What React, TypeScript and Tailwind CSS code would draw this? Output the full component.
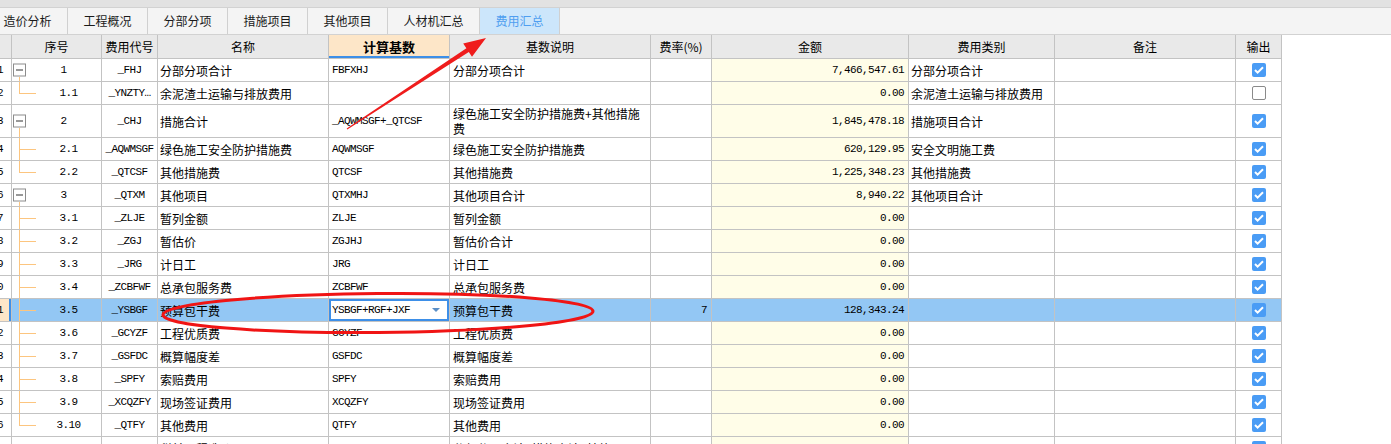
import React from "react";

type Row = {
  rn: string;
  seq: string;
  kind: "box" | "child" | "last" | "none";
  code: string;
  name: string;
  base: string;
  desc: React.ReactNode;
  rate?: string;
  amount: string;
  cat: string;
  out: boolean;
  tall?: boolean;
  sel?: boolean;
};

const rows: Row[] = [
  { rn: "1", seq: "1", kind: "box", code: "_FHJ", name: "分部分项合计", base: "FBFXHJ", desc: "分部分项合计", amount: "7,466,547.61", cat: "分部分项合计", out: true },
  { rn: "2", seq: "1.1", kind: "last", code: "_YNZTY…", name: "余泥渣土运输与排放费用", base: "", desc: "", amount: "0.00", cat: "余泥渣土运输与排放费用", out: false },
  {
    rn: "3",
    seq: "2",
    kind: "box",
    code: "_CHJ",
    name: "措施合计",
    base: "_AQWMSGF+_QTCSF",
    desc: (
      <>
        绿色施工安全防护措施费+其他措施
        <br />费
      </>
    ),
    amount: "1,845,478.18",
    cat: "措施项目合计",
    out: true,
    tall: true,
  },
  { rn: "4", seq: "2.1", kind: "child", code: "_AQWMSGF", name: "绿色施工安全防护措施费", base: "AQWMSGF", desc: "绿色施工安全防护措施费", amount: "620,129.95", cat: "安全文明施工费", out: true },
  { rn: "5", seq: "2.2", kind: "last", code: "_QTCSF", name: "其他措施费", base: "QTCSF", desc: "其他措施费", amount: "1,225,348.23", cat: "其他措施费", out: true },
  { rn: "6", seq: "3", kind: "box", code: "_QTXM", name: "其他项目", base: "QTXMHJ", desc: "其他项目合计", amount: "8,940.22", cat: "其他项目合计", out: true },
  { rn: "7", seq: "3.1", kind: "child", code: "_ZLJE", name: "暂列金额", base: "ZLJE", desc: "暂列金额", amount: "0.00", cat: "", out: true },
  { rn: "8", seq: "3.2", kind: "child", code: "_ZGJ", name: "暂估价", base: "ZGJHJ", desc: "暂估价合计", amount: "0.00", cat: "", out: true },
  { rn: "9", seq: "3.3", kind: "child", code: "_JRG", name: "计日工", base: "JRG", desc: "计日工", amount: "0.00", cat: "", out: true },
  { rn: "10", seq: "3.4", kind: "child", code: "_ZCBFWF", name: "总承包服务费", base: "ZCBFWF", desc: "总承包服务费", amount: "0.00", cat: "", out: true },
  { rn: "11", seq: "3.5", kind: "child", code: "_YSBGF", name: "预算包干费", base: "YSBGF+RGF+JXF", desc: "预算包干费", rate: "7", amount: "128,343.24", cat: "", out: true, sel: true },
  { rn: "12", seq: "3.6", kind: "child", code: "_GCYZF", name: "工程优质费", base: "GCYZF", desc: "工程优质费", amount: "0.00", cat: "", out: true },
  { rn: "13", seq: "3.7", kind: "child", code: "_GSFDC", name: "概算幅度差", base: "GSFDC", desc: "概算幅度差", amount: "0.00", cat: "", out: true },
  { rn: "14", seq: "3.8", kind: "child", code: "_SPFY", name: "索赔费用", base: "SPFY", desc: "索赔费用", amount: "0.00", cat: "", out: true },
  { rn: "15", seq: "3.9", kind: "child", code: "_XCQZFY", name: "现场签证费用", base: "XCQZFY", desc: "现场签证费用", amount: "0.00", cat: "", out: true },
  { rn: "16", seq: "3.10", kind: "last", code: "_QTFY", name: "其他费用", base: "QTFY", desc: "其他费用", amount: "0.00", cat: "", out: true },
  { rn: "17", seq: "4", kind: "none", code: "_SQGCZJ", name: "税前工程造价", base: "_FHJ+_CHJ+_QTXM", desc: "分部分项合计+措施合计+其他项目", amount: "9,340,311.01", cat: "", out: true },
];

const tabs = [
  { t: "造价分析", w: "w-[80px]" },
  { t: "工程概况", w: "w-[80px]" },
  { t: "分部分项", w: "w-[80px]" },
  { t: "措施项目", w: "w-[80px]" },
  { t: "其他项目", w: "w-[80px]" },
  { t: "人材机汇总", w: "w-[92px]" },
  { t: "费用汇总", w: "w-[80px]" },
];

const cn = "font-['Noto_Sans_CJK_SC',sans-serif] text-[12px] leading-[15px] text-black";
const mono = "font-['Liberation_Mono','Noto_Sans_CJK_SC',monospace] text-[11px] tracking-[-0.6px] leading-none text-black";
const cell = "shrink-0 h-full border-r border-[#c3c3c3] flex items-center overflow-hidden whitespace-nowrap";
const tree = "bg-[#fcc57f]";

function Check({ on }: { on: boolean }) {
  if (!on) return <div className="w-[14px] h-[14px] rounded-[2px] border border-[#8a8a8a] bg-white" />;
  return (
    <div className="w-[14px] h-[14px] rounded-[2px] bg-[#4a9cf5] flex items-center justify-center">
      <svg width="14" height="14" viewBox="0 0 14 14">
        <polyline points="3,7 5.6,9.6 11,4.2" fill="none" stroke="white" strokeWidth="2" />
      </svg>
    </div>
  );
}

function Seq({ r }: { r: Row }) {
  const pad = r.kind === "box" ? "pl-[14px]" : r.kind === "none" ? "pl-0" : "pl-[24px]";
  return (
    <div className={`${cell} relative w-[90px] justify-center ${pad}`}>
      {r.kind === "box" && (
        <>
          <div className="absolute left-[1px] top-1/2 -translate-y-1/2 w-[13px] h-[13px] border border-[#8c8c8c] bg-white flex items-center justify-center">
            <div className="w-[7px] h-px bg-[#333]" />
          </div>
          <div className={`absolute left-[7px] top-[calc(50%+7px)] bottom-0 w-px ${tree}`} />
        </>
      )}
      {(r.kind === "child" || r.kind === "last") && (
        <>
          <div className={`absolute left-[7px] top-0 w-px ${tree} ${r.kind === "last" ? "h-1/2" : "bottom-0"}`} />
          <div className={`absolute left-[7px] top-1/2 w-[17px] h-px ${tree}`} />
        </>
      )}
      <span className={mono}>{r.seq}</span>
    </div>
  );
}

function TableRow({ r }: { r: Row }) {
  const bg = r.sel ? "bg-[#93c7f4]" : "bg-white";
  return (
    <div className={`flex border-b border-[#c3c3c3] ${r.tall ? "h-[33px]" : "h-[23px]"} ${bg}`}>
      <div
        className={`${cell} w-[31px] justify-end pr-[8px] ${
          r.sel ? "bg-[#fde6c8] shadow-[inset_-2px_0_0_#3d8fe8]" : ""
        }`}
      >
        <span className={mono}>{r.rn}</span>
      </div>
      <Seq r={r} />
      <div className={`${cell} w-[56px] justify-center`}>
        <span className={mono}>{r.code}</span>
      </div>
      <div className={`${cell} w-[171px] pl-[2px]`}>
        <span className={cn}>{r.name}</span>
      </div>
      {r.sel ? (
        <div className={`${cell} w-[121px] pl-[3px] pr-[9px] justify-between bg-white shadow-[inset_0_0_0_2px_#3d8fe8]`}>
          <span className={mono}>{r.base}</span>
          <div className="w-0 h-0 border-l-[4px] border-r-[4px] border-t-[4px] border-l-transparent border-r-transparent border-t-[#5b8fc7]" />
        </div>
      ) : (
        <div className={`${cell} w-[121px] pl-[3px]`}>
          <span className={mono}>{r.base}</span>
        </div>
      )}
      <div className={`${cell} w-[201px] pl-[3px]`}>
        <span className={`${cn} whitespace-normal`}>{r.desc}</span>
      </div>
      <div className={`${cell} w-[61px] justify-end pr-[4px]`}>
        <span className={mono}>{r.rate ?? ""}</span>
      </div>
      <div className={`${cell} w-[197px] justify-end pr-[4px] ${r.sel ? "" : "bg-[#fffde8]"}`}>
        <span className={mono}>{r.amount}</span>
      </div>
      <div className={`${cell} w-[146px] pl-[2px]`}>
        <span className={cn}>{r.cat}</span>
      </div>
      <div className={`${cell} w-[181px]`} />
      <div className={`${cell} w-[46px] justify-center`}>
        <Check on={r.out} />
      </div>
    </div>
  );
}

function Header() {
  const h = "shrink-0 h-full border-r border-[#c3c3c3] flex items-center justify-center font-['Noto_Sans_CJK_SC',sans-serif] text-[12px] text-black";
  return (
    <div className="flex h-[24px] border-b border-[#c3c3c3] bg-[#e9e9e9] w-[1301px]">
      <div className={`${h} w-[31px]`} />
      <div className={`${h} w-[90px]`}>序号</div>
      <div className={`${h} w-[56px]`}>费用代号</div>
      <div className={`${h} w-[171px]`}>名称</div>
      <div className={`${h} w-[121px] bg-[#fde6c8] font-bold text-[13px] shadow-[inset_0_-2px_0_#3d8fe8]`}>计算基数</div>
      <div className={`${h} w-[201px]`}>基数说明</div>
      <div className={`${h} w-[61px] text-[11px]`}>费率(%)</div>
      <div className={`${h} w-[197px]`}>金额</div>
      <div className={`${h} w-[146px]`}>费用类别</div>
      <div className={`${h} w-[181px]`}>备注</div>
      <div className={`${h} w-[46px]`}>输出</div>
    </div>
  );
}

export default function App() {
  return (
    <div className="relative w-[1391px] h-[444px] overflow-hidden bg-white">
      <div className="h-[7px] bg-[#e2e2e2]" />
      <div className="h-[28px] bg-[#f4f4f4] border-t border-b border-[#d2d2d2] flex">
        <div className="flex -ml-[12px]">
          {tabs.map((tab, i) => {
            const active = i === tabs.length - 1;
            return (
              <div
                key={tab.t}
                className={`${tab.w} shrink-0 h-full flex items-center justify-center border-r border-[#d0d0d0] font-['Noto_Sans_CJK_SC',sans-serif] text-[12px] ${
                  active ? "bg-[#cce6fb] text-[#4f9ef0]" : "text-[#1a1a1a]"
                }`}
              >
                {tab.t}
              </div>
            );
          })}
        </div>
      </div>
      <div className="-ml-[19px] w-[1301px]">
        <Header />
        {rows.map((r) => (
          <TableRow key={r.rn} r={r} />
        ))}
      </div>
      <svg className="pointer-events-none absolute left-0 top-0" width="1391" height="444">
        <ellipse
          cx="378"
          cy="313"
          rx="215"
          ry="19.5"
          fill="none"
          stroke="#f01414"
          strokeWidth="3"
          transform="rotate(-0.5 378 313)"
        />
        <polygon
          points="346.7,128.5 466.4,48.3 463.2,43.4 486,38 472,56.8 468.8,51.9 347.3,129.5"
          fill="#ef1c1c"
        />
      </svg>
    </div>
  );
}
